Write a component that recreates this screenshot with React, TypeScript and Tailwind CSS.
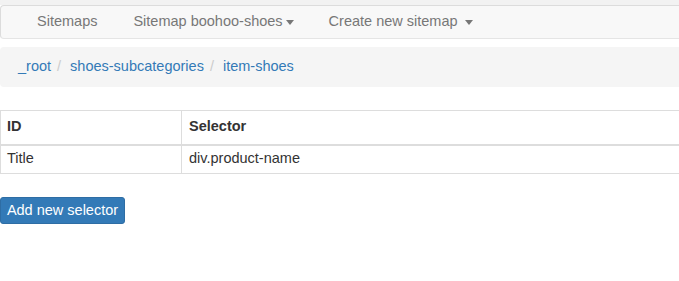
import React from "react";

function Caret() {
  return (
    <span className="inline-block w-0 h-0 border-l-[4px] border-r-[4px] border-t-[5px] border-l-transparent border-r-transparent border-t-[#777] align-middle" />
  );
}

export default function App() {
  return (
    <div className="w-[679px] h-[281px] bg-white overflow-hidden text-[14.5px] text-[#333]" style={{ fontFamily: '"Liberation Sans", Arial, sans-serif' }}>
      <div className="h-[5px] bg-[#f2f2f2]" />
      <nav className="h-[34px] border border-r-0 border-[#dcdcdc] border-b-[#e5e5e5] rounded-l-[4px] bg-[#f8f8f8] flex items-center pl-[36px] text-[#777]">
        <span>Sitemaps</span>
        <span className="ml-[36px] flex items-center gap-[3px]">
          Sitemap boohoo-shoes <Caret />
        </span>
        <span className="ml-[35px] flex items-center gap-[7px]">
          Create new sitemap <Caret />
        </span>
      </nav>
      <div className="mt-[8px] h-[40px] bg-[#f5f5f5] rounded-l-[4px] flex items-center pl-[18px]">
        <span className="text-[#337ab7]">_root</span>
        <span className="text-[#ccc] pl-[6px] pr-[9px]">/</span>
        <span className="text-[#337ab7]">shoes-subcategories</span>
        <span className="text-[#ccc] pl-[6px] pr-[9px]">/</span>
        <span className="text-[#337ab7]">item-shoes</span>
      </div>
      <table className="mt-[23px] w-[680px] border-collapse">
        <thead>
          <tr className="h-[34px]">
            <th className="w-[181px] text-left font-bold pl-[6px] pr-[7px] border border-[#ddd] border-b-2">ID</th>
            <th className="text-left font-bold px-[7px] border border-[#ddd] border-b-2">Selector</th>
          </tr>
        </thead>
        <tbody>
          <tr className="h-[29px]">
            <td className="pl-[6px] pr-[7px] border border-[#ddd]">Title</td>
            <td className="px-[7px] border border-[#ddd]">div.product-name</td>
          </tr>
        </tbody>
      </table>
      <button className="mt-[23px] h-[27px] w-[125px] bg-[#337ab7] border border-[#2e6da4] rounded-[3px] text-white text-[14.5px] flex items-center justify-center">
        Add new selector
      </button>
    </div>
  );
}
